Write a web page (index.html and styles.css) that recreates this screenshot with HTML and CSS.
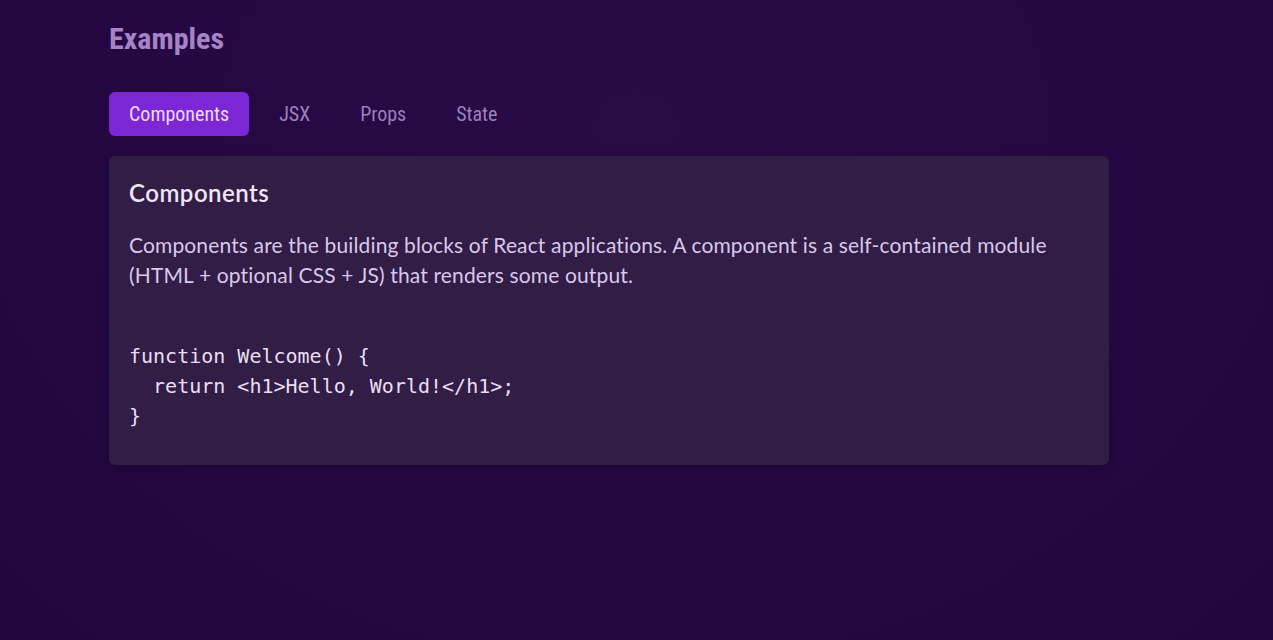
FILE: index.html
```html
<!DOCTYPE html>
<html lang="en">
<head>
<meta charset="utf-8">
<title>Examples</title>
<link rel="stylesheet" href="styles.css">
</head>
<body>
<section class="examples">
  <h2 class="examples-title">Examples</h2>
  <menu class="tabs">
    <li><button class="tab active">Components</button></li>
    <li><button class="tab">JSX</button></li>
    <li><button class="tab">Props</button></li>
    <li><button class="tab">State</button></li>
  </menu>
  <div class="tab-content">
    <h3 class="content-title">Components</h3>
    <p class="content-text">Components are the building blocks of React applications. A component is a self-contained module (HTML + optional CSS + JS) that renders some output.</p>
    <pre class="code"><code>function Welcome() {
  return &lt;h1&gt;Hello, World!&lt;/h1&gt;;
}</code></pre>
  </div>
</section>
</body>
</html>
```

FILE: styles.css
```css
html, body {
  margin: 0;
  height: 100%;
}

body {
  background: radial-gradient(ellipse at 50% 20%, #290b47 0%, #250843 55%, #21063d 100%);
  font-family: Lato, "Open Sans", sans-serif;
  color: #d9c8ea;
}

.examples {
  width: 1000px;
  padding: 20px 0 0 109px;
}

.examples-title {
  margin: 0;
  font-family: Roboto, sans-serif;
  font-stretch: 75%;
  font-weight: 700;
  font-size: 30px;
  line-height: 38px;
  color: #a483c7;
}

.tabs {
  display: flex;
  gap: 10px;
  margin: 34px 0 20px;
  padding: 0;
  list-style: none;
}

.tab {
  height: 44px;
  padding: 0 20px;
  border: none;
  border-radius: 6px;
  background: transparent;
  font-family: Roboto, sans-serif;
  font-stretch: 75%;
  font-size: 20px;
  color: #9c7fbd;
  cursor: pointer;
}

.tab.active {
  background: #7b27d5;
  color: #eadcf8;
}

.tab-content {
  background: #311d46;
  border-radius: 6px;
  padding: 20px 20px 34px;
  box-shadow: 0 2px 8px rgba(0, 0, 0, 0.25);
}

.content-title {
  margin: 1px 0 0;
  font-size: 24px;
  font-weight: 600;
  letter-spacing: 0.5px;
  line-height: 32px;
  color: #f1e6f8;
}

.content-text {
  margin: 21px 0 0;
  font-size: 21px;
  letter-spacing: 0.14px;
  line-height: 30px;
  color: #d9c8ea;
}

.code {
  margin: 51px 0 0;
  font-family: "DejaVu Sans Mono", monospace;
  font-size: 20px;
  line-height: 30px;
  color: #eadff2;
}
```
